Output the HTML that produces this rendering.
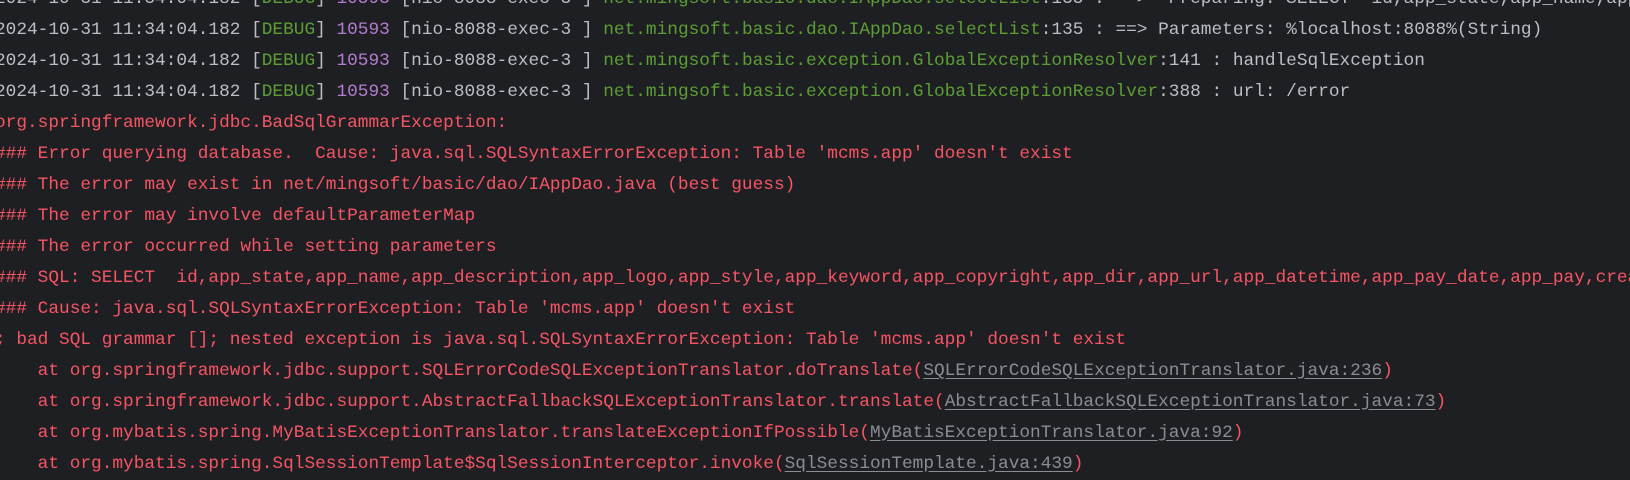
<!DOCTYPE html>
<html><head><meta charset="utf-8"><style>
html,body{margin:0;padding:0;width:1630px;height:470px;overflow:hidden;background:#1e1f22;}
pre{position:absolute;left:-5px;top:-16.5px;margin:0;font-family:"Liberation Mono",monospace;font-size:17.8px;line-height:31px;color:#bcbec4;white-space:pre;}
.g{color:#5c9e35}.p{color:#b57ccf}.r{color:#f75464}.l{color:#8b8d93;text-decoration:underline;text-underline-offset:3px}
</style></head><body>
<pre>2024-10-31 11:34:04.182 [<span class="g">DEBUG</span>] <span class="p">10593</span> [nio-8088-exec-3 ] <span class="g">net.mingsoft.basic.dao.IAppDao.selectList</span>:135 : ==>  Preparing: SELECT  id,app_state,app_name,app_description
2024-10-31 11:34:04.182 [<span class="g">DEBUG</span>] <span class="p">10593</span> [nio-8088-exec-3 ] <span class="g">net.mingsoft.basic.dao.IAppDao.selectList</span>:135 : ==> Parameters: %localhost:8088%(String)
2024-10-31 11:34:04.182 [<span class="g">DEBUG</span>] <span class="p">10593</span> [nio-8088-exec-3 ] <span class="g">net.mingsoft.basic.exception.GlobalExceptionResolver</span>:141 : handleSqlException
2024-10-31 11:34:04.182 [<span class="g">DEBUG</span>] <span class="p">10593</span> [nio-8088-exec-3 ] <span class="g">net.mingsoft.basic.exception.GlobalExceptionResolver</span>:388 : url: /error
<span class="r">org.springframework.jdbc.BadSqlGrammarException: 
### Error querying database.  Cause: java.sql.SQLSyntaxErrorException: Table 'mcms.app' doesn't exist
### The error may exist in net/mingsoft/basic/dao/IAppDao.java (best guess)
### The error may involve defaultParameterMap
### The error occurred while setting parameters
### SQL: SELECT  id,app_state,app_name,app_description,app_logo,app_style,app_keyword,app_copyright,app_dir,app_url,app_datetime,app_pay_date,app_pay,create_by
### Cause: java.sql.SQLSyntaxErrorException: Table 'mcms.app' doesn't exist
; bad SQL grammar []; nested exception is java.sql.SQLSyntaxErrorException: Table 'mcms.app' doesn't exist
    at org.springframework.jdbc.support.SQLErrorCodeSQLExceptionTranslator.doTranslate(<span class="l">SQLErrorCodeSQLExceptionTranslator.java:236</span>)
    at org.springframework.jdbc.support.AbstractFallbackSQLExceptionTranslator.translate(<span class="l">AbstractFallbackSQLExceptionTranslator.java:73</span>)
    at org.mybatis.spring.MyBatisExceptionTranslator.translateExceptionIfPossible(<span class="l">MyBatisExceptionTranslator.java:92</span>)
    at org.mybatis.spring.SqlSessionTemplate$SqlSessionInterceptor.invoke(<span class="l">SqlSessionTemplate.java:439</span>)</span>
</pre>
</body></html>
